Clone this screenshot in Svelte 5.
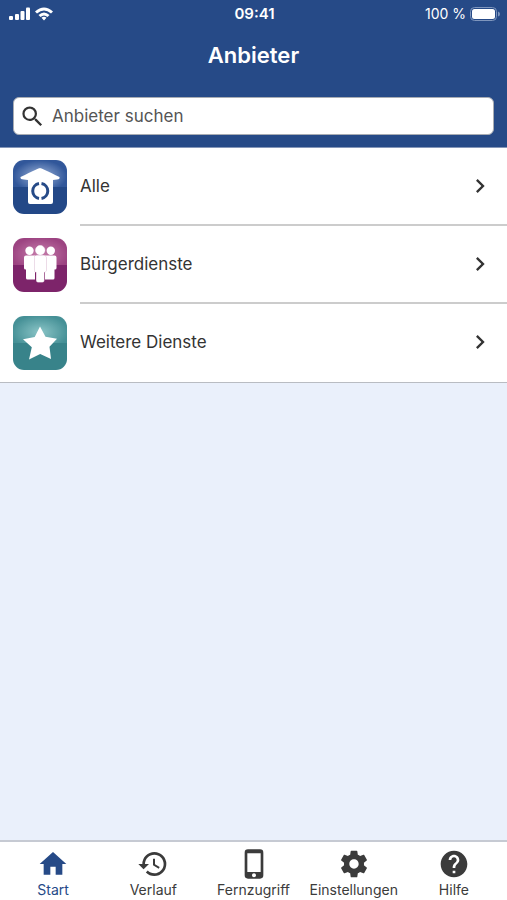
<script lang="ts">
    type Category = { id: string; name: string };
    type Tab = { name: string; icon: string };

    let searchTerm = $state('');
    let activeTab = $state('Start');

    const categories: Category[] = [
        { id: 'all', name: 'Alle' },
        { id: 'citizen', name: 'Bürgerdienste' },
        { id: 'other', name: 'Weitere Dienste' }
    ];

    const tabs: Tab[] = [
        { name: 'Start', icon: 'M10 20v-6h4v6h5v-8h3L12 3 2 12h3v8z' },
        {
            name: 'Verlauf',
            icon: 'M13 3a9 9 0 0 0-9 9H1l3.89 3.89.07.14L9 12H6c0-3.87 3.13-7 7-7s7 3.13 7 7-3.13 7-7 7c-1.93 0-3.68-.79-4.94-2.06l-1.42 1.42A8.954 8.954 0 0 0 13 21a9 9 0 0 0 0-18zm-1 5v5l4.28 2.54.72-1.21-3.5-2.08V8H12z'
        },
        {
            name: 'Fernzugriff',
            icon: 'M16.5 1h-9A2.5 2.5 0 0 0 5 3.5v17A2.5 2.5 0 0 0 7.5 23h9a2.5 2.5 0 0 0 2.5-2.5v-17A2.5 2.5 0 0 0 16.500 1zM12 22c-.83 0-1.500-.67-1.500-1.500S11.170 19 12 19s1.500.67 1.500 1.500S12.830 22 12 22zm5-4H7V4h10v14z'
        },
        {
            name: 'Einstellungen',
            icon: 'M19.430 12.980c.04-.32.07-.64.07-.98s-.03-.66-.07-.98l2.110-1.650c.19-.15.24-.42.12-.64l-2-3.460c-.12-.22-.39-.3-.61-.22l-2.490 1c-.52-.4-1.080-.73-1.690-.98l-.38-2.650A.488.488 0 0 0 14 2h-4c-.25 0-.46.18-.49.42l-.38 2.650c-.61.25-1.170.59-1.690.98l-2.490-1c-.23-.09-.49 0-.61.22l-2 3.460c-.13.22-.07.49.12.64l2.110 1.650c-.04.32-.07.65-.07.98s.03.66.07.98l-2.110 1.650c-.19.15-.24.42-.12.64l2 3.460c.12.22.39.3.61.22l2.490-1c.52.4 1.080.73 1.690.98l.38 2.650c.03.24.24.42.49.42h4c.25 0 .46-.18.49-.42l.38-2.650c.61-.25 1.170-.59 1.690-.98l2.490 1c.23.09.49 0 .61-.22l2-3.460c.12-.22.07-.49-.12-.64l-2.110-1.650zM12 15.500c-1.930 0-3.500-1.570-3.500-3.500s1.570-3.500 3.500-3.500 3.500 1.570 3.500 3.500-1.570 3.500-3.500 3.500z'
        },
        {
            name: 'Hilfe',
            icon: 'M12 2C6.480 2 2 6.480 2 12s4.480 10 10 10 10-4.480 10-10S17.520 2 12 2zm1 17h-2v-2h2v2zm2.070-7.750l-.9.92C13.450 12.900 13 13.500 13 15h-2v-.5c0-1.100.45-2.100 1.170-2.830l1.240-1.260c.37-.36.59-.86.59-1.410 0-1.100-.9-2-2-2s-2 .9-2 2H8c0-2.210 1.790-4 4-4s4 1.790 4 4c0 .88-.36 1.680-.93 2.250z'
        }
    ];
</script>

<div class="app">
    <header>
        <div class="status">
            <svg class="signal" viewBox="0 0 46 16" aria-hidden="true">
                <rect x="0" y="10" width="4" height="4" rx="1" />
                <rect x="6" y="8" width="4" height="6" rx="1" />
                <rect x="11.500" y="5" width="4" height="9" rx="1" />
                <rect x="17" y="1.500" width="4" height="12.500" rx="1" />
                <path d="M26 5.500Q35-2.500 44 5.500L42 7.500Q35 1.500 28 7.500zM29.500 9Q35 4 40.500 9L38.500 11Q35 8 31.500 11zM32.500 11.800Q35 9.800 37.500 11.800L35 14.500z" />
            </svg>
            <time>09:41</time>
            <div class="battery">
                <span>100 %</span>
                <svg viewBox="0 0 30 14" aria-hidden="true">
                    <rect class="case" x="0.500" y="0.500" width="26" height="13" rx="4" />
                    <rect x="2" y="2" width="23" height="10" rx="2.500" />
                    <path class="tip" d="M28 4.500q2 .5 2 2.500t-2 2.500z" />
                </svg>
            </div>
        </div>
        <h1>Anbieter</h1>
        <label class="search">
            <svg viewBox="0 0 24 24" aria-hidden="true">
                <path d="M15.500 14h-.79l-.28-.27A6.471 6.471 0 0 0 16 9.500 6.500 6.500 0 1 0 9.500 16c1.610 0 3.090-.59 4.230-1.570l.27.28v.79l5 4.990L20.490 19l-4.990-5zm-6 0C7.010 14 5 11.990 5 9.500S7.010 5 9.500 5 14 7.010 14 9.500 11.990 14 9.500 14z" />
            </svg>
            <input type="text" placeholder="Anbieter suchen" aria-label="Anbieter suchen" bind:value={searchTerm} />
        </label>
    </header>

    <main>
        <ul>
            {#each categories as category (category.id)}
                <li>
                    <button class="row">
                        <span class="tile {category.id}">
                            <svg viewBox="0 0 54 54" aria-hidden="true">
                                {#if category.id === 'all'}
                                    <path d="M27 8Q28 8 46.500 17Q47 19.500 44 19.500L40 20V42Q40 44 38 44H17Q15 44 15 42V20L11 19.500Q7 19.500 7.500 17Q26 8 27 8z" />
                                    <path class="ring" d="M26 23.600a7.500 7.500 0 0 0 0 14.800M28.500 23.600a7.500 7.500 0 0 1 0 14.800" />
                                {:else if category.id === 'citizen'}
                                    <circle cx="16.500" cy="12.800" r="4.200" />
                                    <circle cx="37.800" cy="12.800" r="4.200" />
                                    <path d="M13 17.500h9V41.500h-7.500q-1.500 0-1.500-1.500V31.500h-.5q-1.500 0-1.500-1.500V19.500q0-2 2-2zM32 17.500h9.500q2 0 2 2v10.500q0 1.500-1.500 1.500h-.5V40q0 1.500-1.500 1.500h-8z" />
                                    <g class="front">
                                        <circle cx="27.200" cy="12.200" r="4.700" />
                                        <path d="M23.500 17.500h7.500q2 0 2 2v13q0 1.500-1.500 1.500h-.5v8.500q0 1.500-1.500 1.500h-4.500q-1.500 0-1.500-1.500V34h-.5q-1.500 0-1.500-1.500v-13q0-2 2-2z" />
                                    </g>
                                {:else}
                                    <path d="M27 10.500 32.500 20.700 44 22.700 36.500 30.800 38 43 27.200 38 16 43.500 18.800 31.300 10 23.200 21.700 20.900z" />
                                {/if}
                            </svg>
                        </span>
                        <span class="content">
                            <span>{category.name}</span>
                            <svg viewBox="0 0 24 24" aria-hidden="true">
                                <path d="M10 6 8.590 7.410 13.170 12l-4.580 4.590L10 18l6-6z" />
                            </svg>
                        </span>
                    </button>
                </li>
            {/each}
        </ul>
    </main>

    <nav>
        {#each tabs as tab (tab.name)}
            <button class:active={activeTab === tab.name} onclick={() => (activeTab = tab.name)}>
                <svg viewBox="0 0 24 24" aria-hidden="true"><path d={tab.icon} /></svg>
                <span>{tab.name}</span>
            </button>
        {/each}
    </nav>
</div>

<style>
    :global(body) {
        margin: 0;
    }

    .app {
        display: flex;
        flex-direction: column;
        min-height: 100vh;
        background: #eaf0fb;
        color: #333;
        font-family: Inter, "Liberation Sans", sans-serif;
    }

    svg {
        display: block;
        flex: none;
        fill: currentColor;
    }

    button {
        border: 0;
        background: none;
        color: inherit;
        font: inherit;
        cursor: pointer;
    }

    header {
        padding: 0 13px 12px;
        background: #264a87;
        border-bottom: 1px solid #8496b8;
        color: #fff;
    }

    .status {
        display: grid;
        grid-template-columns: 1fr auto 1fr;
        align-items: center;
        height: 27px;
        margin: 0 -6px 0 -4px;
        font-size: 14px;
    }

    .signal {
        width: 46px;
        height: 16px;
    }

    time {
        font-size: 15px;
        font-weight: 600;
    }

    .battery {
        display: flex;
        align-items: center;
        justify-content: flex-end;
        gap: 4px;
    }

    .battery svg {
        width: 30px;
        height: 14px;
    }

    .battery .case {
        fill: none;
        stroke: #7f96bd;
    }

    .battery .tip {
        fill: #7f96bd;
    }

    h1 {
        margin: 13px 0 27px;
        font-size: 22px;
        font-weight: 600;
        line-height: 30px;
        text-align: center;
    }

    .search {
        display: flex;
        align-items: center;
        gap: 6px;
        height: 36px;
        padding: 0 5px;
        border: 1px solid #a8acb3;
        border-radius: 6px;
        background: #fff;
        color: #333;
    }

    .search svg {
        width: 27px;
        height: 27px;
    }

    .search input {
        flex: 1;
        min-width: 0;
        padding: 0;
        border: 0;
        outline: 0;
        background: none;
        color: #333;
        font: inherit;
        font-size: 17px;
    }

    .search input::placeholder {
        color: #555;
        opacity: 1;
    }

    main {
        flex: 1;
    }

    ul {
        margin: 0;
        padding: 0;
        list-style: none;
        background: #fff;
        border-bottom: 1px solid #b9bcc2;
    }

    .row {
        display: flex;
        align-items: center;
        gap: 13px;
        width: 100%;
        padding: 0 0 0 13px;
        font-size: 17px;
        text-align: left;
    }

    .content {
        display: flex;
        flex: 1;
        align-items: center;
        justify-content: space-between;
        height: 76px;
        padding-right: 13px;
        border-bottom: 2px solid #ccc;
    }

    li:last-child .content {
        border-bottom-color: transparent;
    }

    .content svg {
        width: 28px;
        height: 28px;
    }

    .tile {
        width: 54px;
        height: 54px;
        border-radius: 11px;
        color: #fff;
    }

    .tile svg {
        width: 54px;
        height: 54px;
    }

    .all {
        background: radial-gradient(ellipse at 50% 60%, #9db3d9, #31579a 70%) top / 100% 50% no-repeat, #234887;
    }

    .citizen {
        background: radial-gradient(ellipse at 50% 60%, #c77eac, #9c4381 75%) top / 100% 50% no-repeat, #7d246a;
    }

    .other {
        background: radial-gradient(ellipse at 50% 60%, #8bc5c7, #459096 75%) top / 100% 50% no-repeat, #38838a;
    }

    .ring {
        fill: none;
        stroke: #264a87;
        stroke-width: 3;
    }

    .front {
        stroke: #d9b8d0;
        stroke-width: 1;
        paint-order: stroke;
    }

    nav {
        display: flex;
        padding: 0 3px;
        border-top: 2px solid #c6cad3;
        background: #fff;
        color: #3b3b3b;
    }

    nav button {
        display: flex;
        flex: 1 1 0;
        flex-direction: column;
        align-items: center;
        min-width: 0;
        padding: 6px 0 0;
        font-size: 14px;
        line-height: 20px;
    }

    nav svg {
        width: 32px;
        height: 32px;
    }

    nav .active {
        color: #264a87;
    }
</style>
